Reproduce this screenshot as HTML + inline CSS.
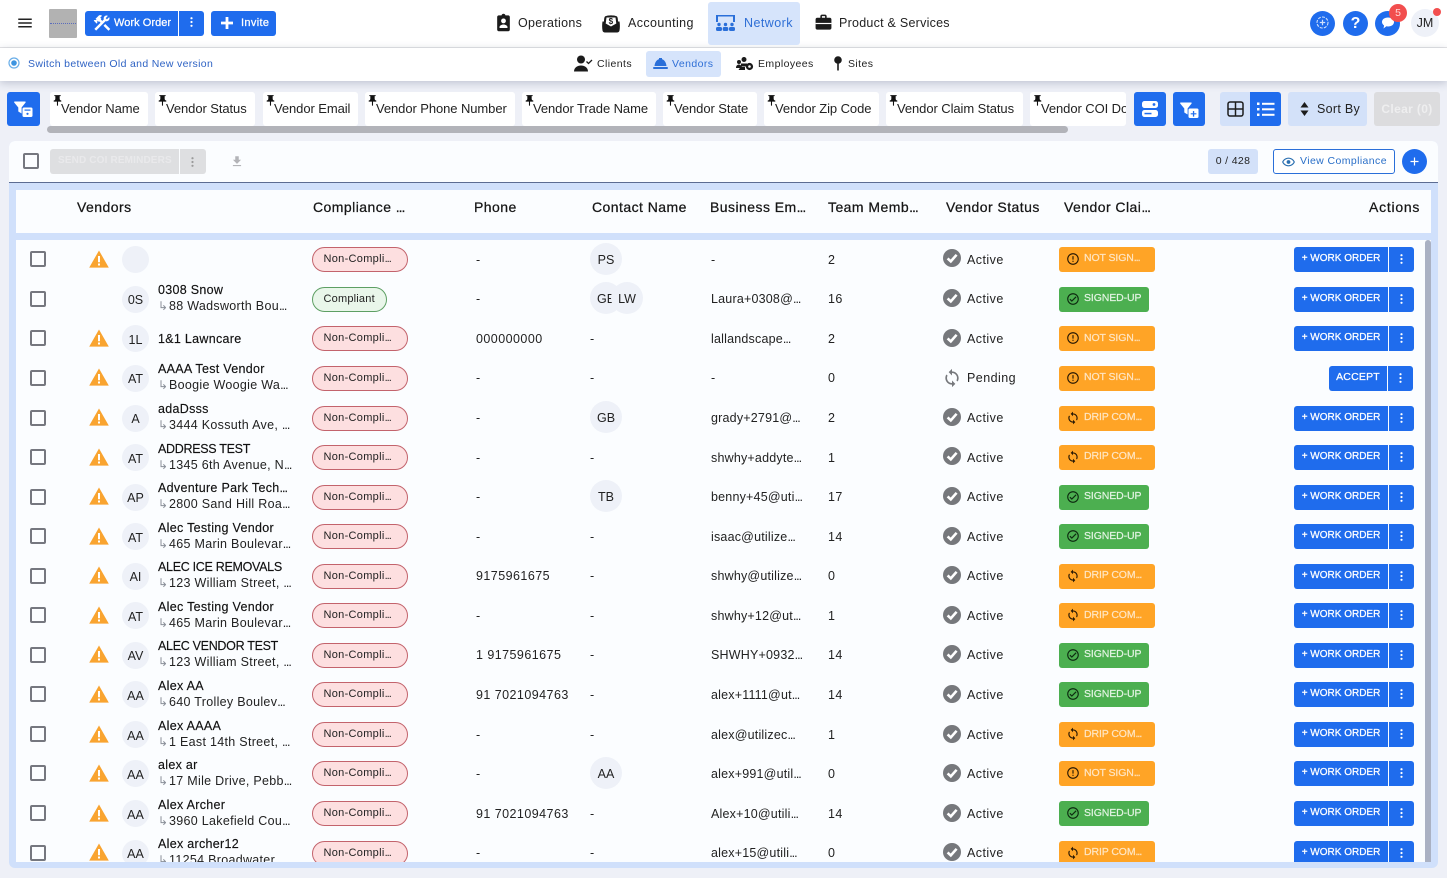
<!DOCTYPE html>
<html><head><meta charset="utf-8"><title>Vendors</title>
<style>
*{box-sizing:border-box}
html,body{margin:0;padding:0}
body{width:1447px;height:878px;overflow:hidden;position:relative;background:#eef0f7;font-family:"Liberation Sans",sans-serif;color:#1a1a1a;font-size:13px;letter-spacing:.35px}
.a{position:absolute}
.t{position:absolute;white-space:nowrap}
svg{display:block;position:absolute}
u{text-decoration:none;letter-spacing:-1px}
.bb{position:absolute;background:#1f6ced;color:#fff}
.chip{position:absolute;top:92px;height:34px;background:#fff;border-radius:3px;overflow:hidden;line-height:34px;padding-left:11px;font-size:13px;white-space:nowrap;color:#222;letter-spacing:-.08px}
.chip svg{left:1px;top:2px;width:13px;height:13px;fill:#111}
.r{position:absolute;left:0;width:1431px;height:40px;font-size:12.5px;line-height:42px;color:#222;letter-spacing:.45px}
.r>*{position:absolute}
.c{left:30px;top:12px;width:16px;height:16px;border:2px solid #75777f;border-radius:2px}
.w{left:89px;top:11px;width:20px;height:18px}
.v{left:122px;top:7px;width:27px;height:27px;border-radius:50%;background:#eef1f8;text-align:center;line-height:30px;font-size:12.5px;letter-spacing:0;font-weight:400}
.n{left:158px;top:4px;line-height:16px;font-size:12.5px;white-space:nowrap;color:#111;letter-spacing:.3px;-webkit-text-stroke:.15px #111}
.n.cp{letter-spacing:-.3px}
.d{left:158px;top:20px;line-height:16px;font-size:12.5px;white-space:nowrap;letter-spacing:.3px}
.d i{font-style:normal;color:#8a8f99;font-size:12px;display:inline-block;width:11px;letter-spacing:0}
.p{left:312px;top:8px;width:96px;height:25px;border-radius:13px;background:#fddfe0;border:1px solid #c3636c;line-height:23px;padding-left:10.5px;font-size:11px;color:#222;letter-spacing:.3px}
.p.g{width:75px;background:#e9f6ea;border-color:#5d9f63;letter-spacing:.2px}
.ph{left:476px}.co{left:590px}.em{left:711px;letter-spacing:.2px}.tm{left:828px}
.o{top:4px;width:32px;height:32px;border-radius:50%;background:#eef1f8;text-align:center;line-height:35px;font-size:12.5px;letter-spacing:0;font-weight:400}
.si{left:943px;top:11px;width:18px;height:18px}
.sp{left:942px;top:11px;width:20px;height:20px;fill:#76787c}
.st{left:967px}
.k{left:1059px;top:8px;width:96px;height:25px;border-radius:3px;background:#ffa426;color:#ffe6c4;font-size:10.5px;line-height:24px;padding-left:25px;letter-spacing:-.1px;-webkit-text-stroke:.2px #ffe6c4}
.k.g{width:90px;background:#4caf50;color:#e4f4e4;-webkit-text-stroke:.2px #e4f4e4}
.k svg{left:7px;top:5px;width:14px;height:14px;fill:#2a1a05;-webkit-text-stroke:0}
.k.g svg{fill:#0d2a10}
.wo{left:1294px;top:8px;width:94px;height:25px;border-radius:3px 0 0 3px;background:#1f6ced;color:#fff;font-size:10px;line-height:24px;text-align:center;letter-spacing:0;-webkit-text-stroke:.25px #fff}
.mo{left:1389px;top:8px;width:25px;height:25px;border-radius:0 3px 3px 0;background:#1f6ced}
.mo svg{left:8.5px;top:7px;width:7px;height:10px;fill:#fff}
.s .c{top:13px}
.s .v{top:8px;line-height:29px}
.s .p{top:9px;line-height:22px}
.s .k,.s .wo{top:9px;line-height:23px}
.s .mo{top:9px}
.z .p{line-height:22px}
.z .k,.z .wo{line-height:23px}
.z .si{top:10px}
.h{position:absolute;top:199px;font-size:14px;color:#161616;line-height:17px;white-space:nowrap;letter-spacing:.45px;-webkit-text-stroke:.25px #161616}
.nv{position:absolute;top:15px;font-size:12.5px;line-height:16px;color:#222;letter-spacing:.3px}
.sb{position:absolute;top:57px;font-size:10.5px;line-height:14px;color:#222;letter-spacing:.42px}
.bt{position:absolute;top:16px;color:#fff;font-size:11px;line-height:14px;-webkit-text-stroke:.25px #fff}
</style></head><body>
<svg width="0" height="0" style="position:absolute"><defs>
<symbol id="w" viewBox="0 0 20 18"><path fill="#f9a430" d="M10 .5 19.8 17.6H.2z"/><path fill="#fff" d="M9 6h2v6.2H9zM9 13.5h2v2H9z"/></symbol>
<symbol id="ok" viewBox="0 0 18 18"><circle cx="9" cy="9" r="9" fill="#76787c"/><path fill="none" stroke="#fff" stroke-width="2.6" d="M4.6 9.4 7.8 12.4 13.6 5.8"/></symbol>
<symbol id="sy" viewBox="0 0 24 24"><path d="M12 4V1L8 5l4 4V6c3.31 0 6 2.69 6 6 0 1.01-.25 1.97-.7 2.8l1.46 1.46C19.54 15.03 20 13.57 20 12c0-4.42-3.58-8-8-8zm0 14c-3.31 0-6-2.69-6-6 0-1.01.25-1.97.7-2.8L5.24 7.74C4.46 8.97 4 10.43 4 12c0 4.42 3.58 8 8 8v3l4-4-4-4v3z"/></symbol>
<symbol id="er" viewBox="0 0 24 24"><path d="M11 15h2v2h-2zm0-8h2v6h-2zm.99-5C6.47 2 2 6.48 2 12s4.47 10 9.99 10C17.52 22 22 17.52 22 12S17.52 2 11.99 2zM12 20c-4.42 0-8-3.58-8-8s3.58-8 8-8 8 3.58 8 8-3.58 8-8 8z"/></symbol>
<symbol id="cc" viewBox="0 0 24 24"><path d="M16.59 7.58L10 14.17l-2.59-2.58L6 13l4 4 8-8zM12 2C6.48 2 2 6.48 2 12s4.48 10 10 10 10-4.48 10-10S17.52 2 12 2zm0 18c-4.42 0-8-3.58-8-8s3.58-8 8-8 8 3.58 8 8-3.58 8-8 8z"/></symbol>
<symbol id="mv" viewBox="0 0 7 10"><circle cx="3.5" cy="1.2" r="1.1"/><circle cx="3.5" cy="5" r="1.1"/><circle cx="3.5" cy="8.8" r="1.1"/></symbol>
<symbol id="pin" viewBox="0 0 24 24"><path d="M16 9V4h1c.55 0 1-.45 1-1s-.45-1-1-1H7c-.55 0-1 .45-1 1s.45 1 1 1h1v5c0 1.66-1.34 3-3 3v2h5.97v7l1 1 1-1v-7H19v-2c-1.66 0-3-1.34-3-3z"/></symbol>
<symbol id="fl" viewBox="0 0 20 17"><path d="M.8.5h10.200c.6 0 .9.6.5 1.100L7.600 6.500v6L4.300 10.500v-4L.3 1.600C-.1 1.100.2.500.8.500z" fill="#fff"/><rect x="8.500" y="6.500" width="10" height="9.500" rx="1.500" fill="#fff"/></symbol>
</defs></svg>

<!-- top bar -->
<div class="a" style="left:0;top:0;width:1447px;height:47px;background:#fff"></div>
<div class="a" style="left:0;top:47px;width:1447px;height:1px;background:#e4e4e6"></div>
<div class="a" style="left:0;top:48px;width:1447px;height:33px;background:#fff;box-shadow:0 2px 8px rgba(70,80,110,.28)"></div>
<svg style="left:16px;top:14px" width="18" height="18" viewBox="0 0 24 24"><path fill="#222" d="M3 18h18v-2H3v2zm0-5h18v-2H3v2zm0-7v2h18V6H3z"/></svg>
<div class="a" style="left:49px;top:9px;width:28px;height:29px;background:#b2b2b2;border-radius:1px"></div>
<div class="a" style="left:50px;top:23px;width:26px;height:1px;border-top:1px dotted #5a6cbc"></div>
<div class="bb" style="left:85px;top:11px;width:93px;height:25px;border-radius:3px 0 0 3px"></div>
<svg style="left:92px;top:13px" width="20" height="20" viewBox="0 0 24 24"><path fill="#fff" d="M13.78 15.3l6 6 2.11-2.16-6-6zM17.5 10c1.93 0 3.5-1.57 3.5-3.5 0-.58-.16-1.12-.41-1.6l-2.7 2.7-1.49-1.49 2.7-2.7c-.48-.25-1.02-.41-1.6-.41C15.57 3 14 4.57 14 6.5c0 .41.08.8.21 1.16l-1.85 1.85-1.78-1.78.71-.71-1.41-1.41L12 3.49c-1.17-1.17-3.07-1.17-4.24 0L4.22 7.03l1.41 1.41H2.81l-.71.71 3.54 3.54.71-.71V9.15l1.41 1.41.71-.71 1.78 1.78-7.41 7.41 2.12 2.12L16.34 9.790c.36.13.75.21 1.16.21z"/></svg>
<div class="bt" style="left:114px;letter-spacing:.05px">Work Order</div>
<div class="bb" style="left:179px;top:11px;width:25px;height:25px;border-radius:0 3px 3px 0"></div>
<svg style="left:188px;top:17px;fill:#fff" width="7" height="10"><use href="#mv"/></svg>
<div class="bb" style="left:211px;top:11px;width:65px;height:25px;border-radius:3px"></div>
<svg style="left:218px;top:14px" width="18" height="18" viewBox="0 0 18 18"><path fill="#fff" d="M7.600 3h2.800v4.600H15v2.800h-4.600V15H7.600v-4.600H3V7.600h4.600z"/></svg>
<div class="bt" style="left:241px;letter-spacing:.35px">Invite</div>

<svg style="left:494px;top:13px" width="19" height="19" viewBox="0 0 24 24"><path fill="#1b1b1b" d="M18 3h-3.500C14.100 1.800 13.100 1 12 1s-2.100.8-2.500 2H6c-1.100 0-2 .9-2 2v16c0 1.100.9 2 2 2h12c1.100 0 2-.9 2-2V5c0-1.100-.9-2-2-2zm-6 4c1.700 0 3 1.300 3 3s-1.300 3-3 3-3-1.300-3-3 1.300-3 3-3zm5 12H7v-1.400c0-2 3.300-3.100 5-3.100s5 1.100 5 3.100z"/></svg>
<div class="nv" style="left:518px">Operations</div>
<svg style="left:602px;top:14px" width="18" height="19" viewBox="0 0 18 19"><path fill="#1b1b1b" d="M3 2.500C5 1 13 1 15 2.500c1 .8 1 5 1 5h1.500c.5 3 .5 6 0 9-.2 1.300-1.300 2-2.500 2H3c-1.200 0-2.300-.7-2.500-2-.5-3-.5-6 0-9H2s0-4.200 1-5z"/><path d="M4.500 3.500h9l.8 6-5.300 3-5.300-3z" fill="#fff"/><text x="9" y="10" text-anchor="middle" font-size="8" font-weight="700" font-family="Liberation Sans" fill="#1b1b1b">$</text></svg>
<div class="nv" style="left:628px;letter-spacing:.4px">Accounting</div>
<div class="a" style="left:708px;top:2px;width:92px;height:43px;background:#d6e4fb;border-radius:3px"></div>
<svg style="left:715px;top:14px" width="21" height="18" viewBox="0 0 21 18" fill="#2a6fd9"><path d="M1 2.500V1h19v1.500zM1 1h2v7H1zM18 1h2v7h-2z"/><circle cx="4" cy="10.500" r="1.700"/><circle cx="10.500" cy="10.500" r="1.700"/><circle cx="17" cy="10.500" r="1.700"/><rect x="1" y="13" width="6" height="4" rx="1.500"/><rect x="7.700" y="13" width="5.600" height="4" rx="1.500"/><rect x="14" y="13" width="6" height="4" rx="1.500"/></svg>
<div class="nv" style="left:744px;color:#2f6fd6;letter-spacing:.45px">Network</div>
<svg style="left:814px;top:13px" width="19" height="19" viewBox="0 0 24 24"><path fill="#1b1b1b" d="M20 6h-4V4c0-1.110-.89-2-2-2h-4c-1.110 0-2 .89-2 2v2H4c-1.110 0-2 .89-2 2v11c0 1.110.89 2 2 2h16c1.110 0 2-.89 2-2V8c0-1.110-.89-2-2-2zm-6 0h-4V4h4v2z"/><rect x="2" y="12.500" width="20" height="1.500" fill="#fff"/></svg>
<div class="nv" style="left:839px;letter-spacing:.25px">Product &amp; Services</div>

<div class="a" style="left:1310px;top:10.500px;width:25px;height:25px;border-radius:50%;background:#1f6ced"></div>
<svg style="left:1316px;top:16px" width="13" height="13" viewBox="0 0 13 13"><circle cx="6.500" cy="6.500" r="5.500" fill="none" stroke="#cfe0fb" stroke-width="1.100" stroke-dasharray="3 1.200"/><path d="M5.900 3.800h1.200v2.100h2.100v1.200H7.100v2.100H5.900V7.100H3.800V5.900h2.100z" fill="#cfe0fb"/></svg>
<div class="a" style="left:1343px;top:10.500px;width:25px;height:25px;border-radius:50%;background:#1f6ced;color:#fff;text-align:center;font-size:16px;font-weight:700;line-height:25px;letter-spacing:0">?</div>
<div class="a" style="left:1375px;top:10.500px;width:25px;height:25px;border-radius:50%;background:#1f6ced"></div>
<svg style="left:1381px;top:16px" width="14" height="14" viewBox="0 0 14 14"><path fill="#fff" d="M7 1.500c3.500 0 6 1.900 6 4.500s-2.500 4.500-6 4.500c-.6 0-1.100 0-1.600-.2L2.500 12.500l.6-3C1.800 8.600 1 7.400 1 6c0-2.600 2.500-4.500 6-4.500z"/></svg>
<div class="a" style="left:1389px;top:4px;width:18px;height:18px;border-radius:50%;background:#f24e4e;color:#ffd9d9;text-align:center;font-size:10.500px;line-height:18px;letter-spacing:0">5</div>
<div class="a" style="left:1411px;top:9px;width:28px;height:28px;border-radius:50%;background:#eef1f8;text-align:center;font-size:12.500px;line-height:29px;letter-spacing:0;color:#222">JM</div>
<div class="a" style="left:1433px;top:8px;width:8px;height:8px;border-radius:50%;background:#f24e4e"></div>

<!-- second row -->
<svg style="left:8px;top:57px" width="12" height="12" viewBox="0 0 12 12"><circle cx="6" cy="6" r="5" fill="none" stroke="#6aaee8" stroke-width="1.200"/><circle cx="6" cy="6" r="2.800" fill="#3d94e0"/></svg>
<div class="sb" style="left:28px;color:#2f63c4;letter-spacing:.33px">Switch between Old and New version</div>
<svg style="left:574px;top:55px" width="19" height="17" viewBox="0 0 19 17"><circle cx="7" cy="4.500" r="4" fill="#1b1b1b"/><path fill="#1b1b1b" d="M0 16.500c0-4 3.500-6 7-6s7 2 7 6z"/><path fill="none" stroke="#1b1b1b" stroke-width="1.300" d="M12.500 6.500l2 2 3.500-3.500"/></svg>
<div class="sb" style="left:597px">Clients</div>
<div class="a" style="left:646px;top:51px;width:75px;height:26px;background:#d6e4fb;border-radius:3px"></div>
<svg style="left:653px;top:57px" width="15" height="13" viewBox="0 0 15 13"><path fill="#2a6fd9" d="M1.500 9C2 4.500 4.500 2.500 6 2.300V1h3v1.300c1.500.2 4 2.200 4.500 6.700z"/><rect x="0" y="10" width="15" height="2" rx="1" fill="#2a6fd9"/></svg>
<div class="sb" style="left:672px;color:#2f6fd6">Vendors</div>
<svg style="left:736px;top:57px" width="18" height="14" viewBox="0 0 18 14" fill="#1b1b1b"><circle cx="8" cy="2.500" r="2.500"/><circle cx="3" cy="5" r="2"/><path d="M0 11c0-2.500 1.500-3.500 3-3.500S6 9 6 11zM5 6.500h6l1 3H5zM4.500 10H9v3H2.500z"/><circle cx="13.500" cy="9.500" r="3.600"/><circle cx="13.500" cy="9.500" r="1.300" fill="#fff"/></svg>
<div class="sb" style="left:758px">Employees</div>
<svg style="left:834px;top:56px" width="8" height="15" viewBox="0 0 8 15"><circle cx="4" cy="4" r="3.800" fill="#1b1b1b"/><rect x="3.200" y="7" width="1.600" height="7.500" fill="#1b1b1b"/></svg>
<div class="sb" style="left:848px">Sites</div>

<!-- filter row -->
<div class="bb" style="left:7px;top:92px;width:33px;height:34px;border-radius:3px"></div>
<svg style="left:14px;top:101px" width="20" height="17"><use href="#fl"/><rect x="10.500" y="8.500" width="6" height="1.200" fill="#1f6ced"/><circle cx="13.500" cy="12.800" r="1.100" fill="#1f6ced"/></svg>
<div class="chip" style="left:50px;width:98px"><svg><use href="#pin"/></svg>Vendor Name</div>
<div class="chip" style="left:155px;width:100px"><svg><use href="#pin"/></svg>Vendor Status</div>
<div class="chip" style="left:263px;width:95px"><svg><use href="#pin"/></svg>Vendor Email</div>
<div class="chip" style="left:365px;width:150px"><svg><use href="#pin"/></svg>Vendor Phone Number</div>
<div class="chip" style="left:522px;width:134px"><svg><use href="#pin"/></svg>Vendor Trade Name</div>
<div class="chip" style="left:663px;width:94px"><svg><use href="#pin"/></svg>Vendor State</div>
<div class="chip" style="left:764px;width:115px"><svg><use href="#pin"/></svg>Vendor Zip Code</div>
<div class="chip" style="left:886px;width:137px"><svg><use href="#pin"/></svg>Vendor Claim Status</div>
<div class="chip" style="left:1030px;width:96px"><svg><use href="#pin"/></svg>Vendor COI Document</div>
<div class="a" style="left:47px;top:126px;width:1021px;height:7px;background:#b2b3b9;border-radius:4px"></div>
<div class="bb" style="left:1134px;top:92px;width:32px;height:34px;border-radius:3px"></div>
<svg style="left:1141px;top:101px" width="18" height="16" viewBox="0 0 18 16"><rect x="1" y="0" width="16" height="7" rx="2.500" fill="#fff"/><rect x="1" y="9" width="16" height="7" rx="2.500" fill="#fff"/><circle cx="13" cy="3.500" r="1.400" fill="#1f6ced"/><rect x="3.500" y="11.800" width="7" height="1.500" fill="#1f6ced"/></svg>
<div class="bb" style="left:1173px;top:92px;width:32px;height:34px;border-radius:3px"></div>
<svg style="left:1180px;top:102px" width="20" height="17"><use href="#fl"/><path fill="#1f6ced" d="M12.900 9h1.300v2.200h2.200v1.200h-2.200v2.200h-1.300v-2.200h-2.200v-1.200h2.200z"/></svg>
<div class="a" style="left:1220px;top:92px;width:31px;height:34px;background:#d3e1f9;border-radius:3px 0 0 3px"></div>
<svg style="left:1227px;top:101px" width="17" height="16" viewBox="0 0 17 16"><rect x="1" y="1" width="15" height="14" rx="2" fill="none" stroke="#1d1d1d" stroke-width="1.500"/><path d="M1 8h15M8.500 1v14" stroke="#1d1d1d" stroke-width="1.500"/></svg>
<div class="bb" style="left:1250px;top:92px;width:31px;height:34px;border-radius:0 3px 3px 0"></div>
<svg style="left:1257px;top:101px" width="18" height="16" viewBox="0 0 18 16" fill="#fff"><rect x="0" y="1.500" width="2.500" height="2.500"/><rect x="0" y="7" width="2.500" height="2.500"/><rect x="0" y="12.500" width="2.500" height="2.500"/><rect x="5" y="1.800" width="12.500" height="2"/><rect x="5" y="7.300" width="12.500" height="2"/><rect x="5" y="12.800" width="12.500" height="2"/></svg>
<div class="a" style="left:1288px;top:92px;width:79px;height:34px;background:#d3e1f9;border-radius:3px"></div>
<svg style="left:1300px;top:102px" width="9" height="14" viewBox="0 0 9 14"><path fill="#1b1b1b" d="M4.500 0 8.500 5.500H.5zM4.500 14 .5 8.500h8z"/></svg>
<div class="t" style="left:1317px;top:101px;font-size:12.500px;line-height:16px;color:#222;letter-spacing:.3px">Sort By</div>
<div class="a" style="left:1374px;top:92px;width:66px;height:34px;background:#dcdcde;border-radius:3px;color:#eeeeef;text-align:center;font-size:12px;line-height:34px;font-weight:700">Clear (0)</div>

<!-- table frame -->
<div class="a" style="left:9px;top:141px;width:1429px;height:727px;background:#d0e0fb;border-radius:6px"></div>
<div class="a" style="left:9px;top:141px;width:1429px;height:41px;background:#fbfdff;border-radius:6px 6px 0 0"></div>
<div class="a" style="left:9px;top:182px;width:1429px;height:1px;background:#5c6c92"></div>
<div class="a" style="left:23px;top:153px;width:16px;height:16px;border:2px solid #75777f;border-radius:2px"></div>
<div class="a" style="left:50px;top:149px;width:129px;height:25px;background:#dedfe1;border-radius:3px 0 0 3px;color:#e9e9eb;font-size:10px;font-weight:700;line-height:24px;padding-left:8px;white-space:nowrap;letter-spacing:.15px">SEND COI REMINDERS</div>
<div class="a" style="left:180px;top:149px;width:26px;height:25px;background:#dedfe1;border-radius:0 3px 3px 0"></div>
<svg style="left:189px;top:157px;fill:#9a9a9a" width="7" height="10"><use href="#mv"/></svg>
<svg style="left:230px;top:154px" width="14" height="15" viewBox="0 0 24 24"><path fill="#b3b4b8" d="M19 9h-4V3H9v6H5l7 7 7-7zM5 18v2h14v-2H5z"/></svg>
<div class="a" style="left:1208px;top:149px;width:50px;height:25px;background:#d3e1f9;border-radius:3px;text-align:center;font-size:10.500px;line-height:24px;color:#222">0 / 428</div>
<div class="a" style="left:1273px;top:149px;width:122px;height:25px;background:#fff;border:1px solid #2a6fd9;border-radius:3px"></div>
<svg style="left:1281px;top:155px" width="15" height="14" viewBox="0 0 24 24"><path fill="#2a6fb0" d="M12 4.500C7 4.500 2.730 7.610 1 12c1.730 4.390 6 7.500 11 7.500s9.270-3.110 11-7.500c-1.730-4.390-6-7.500-11-7.500zm0 13c-3.500 0-7-2-8.800-5.500C5 8.500 8.500 6.500 12 6.500s7 2 8.800 5.500c-1.800 3.500-5.300 5.500-8.800 5.500z"/><circle cx="12" cy="12" r="3.200" fill="#2a6fb0"/></svg>
<div class="t" style="left:1300px;top:154px;font-size:10.500px;line-height:14px;color:#2a6fc8;letter-spacing:.4px">View Compliance</div>
<div class="a" style="left:1402px;top:149px;width:25px;height:25px;border-radius:50%;background:#1f6ced"></div>
<svg style="left:1408px;top:155px" width="13" height="13" viewBox="0 0 13 13"><path fill="#fff" d="M5.900 2.500h1.200v3.400h3.400v1.200H7.100v3.400H5.900V7.100H2.500V5.900h3.400z"/></svg>

<!-- table header -->
<div class="a" style="left:16px;top:190px;width:1415px;height:43px;background:#fbfdff"></div>
<div class="h" style="left:77px">Vendors</div>
<div class="h" style="left:313px">Compliance <u>...</u></div>
<div class="h" style="left:474px">Phone</div>
<div class="h" style="left:592px">Contact Name</div>
<div class="h" style="left:710px">Business Em<u>...</u></div>
<div class="h" style="left:828px">Team Memb<u>...</u></div>
<div class="h" style="left:946px">Vendor Status</div>
<div class="h" style="left:1064px">Vendor Clai<u>...</u></div>
<div class="h" style="left:1369px;letter-spacing:.75px">Actions</div>

<!-- table body -->
<div class="a" style="left:16px;top:240px;width:1415px;height:622px;background:#fbfdff"></div>
<div class="a" style="left:1425px;top:240px;width:6px;height:622px;background:#aab1c3;border-radius:3px 3px 0 0"></div>
<div class="a" id="b" style="left:0;top:240px;width:1425px;height:622px;overflow:hidden">

<div class="r z" style="top:-1px"><i class="c"></i><svg class="w"><use href="#w"/></svg><b class="v"></b><span class="p">Non-Compli<u>...</u></span><span class="ph">-</span><b class="o" style="left:590px">PS</b><span class="em">-</span><span class="tm">2</span><svg class="si"><use href="#ok"/></svg><span class="st">Active</span><span class="k"><svg><use href="#er"/></svg>NOT SIGN<u>...</u></span><span class="wo">+ WORK ORDER</span><span class="mo"><svg><use href="#mv"/></svg></span></div>

<div class="r s" style="top:38px"><i class="c"></i><b class="v">0S</b><span class="n">0308 Snow</span><span class="d"><i>↳</i>88 Wadsworth Bou<u>...</u></span><span class="p g">Compliant</span><span class="ph">-</span><b class="o" style="left:590px;text-align:left;padding-left:7px">GE</b><b class="o" style="left:611px">LW</b><span class="em">Laura+0308@<u>...</u></span><span class="tm">16</span><svg class="si"><use href="#ok"/></svg><span class="st">Active</span><span class="k g"><svg><use href="#cc"/></svg>SIGNED-UP</span><span class="wo">+ WORK ORDER</span><span class="mo"><svg><use href="#mv"/></svg></span></div>

<div class="r" style="top:78px"><i class="c"></i><svg class="w"><use href="#w"/></svg><b class="v">1L</b><span class="n" style="top:13px">1&amp;1 Lawncare</span><span class="p">Non-Compli<u>...</u></span><span class="ph">000000000</span><span class="co">-</span><span class="em">lallandscape<u>...</u></span><span class="tm">2</span><svg class="si"><use href="#ok"/></svg><span class="st">Active</span><span class="k"><svg><use href="#er"/></svg>NOT SIGN<u>...</u></span><span class="wo">+ WORK ORDER</span><span class="mo"><svg><use href="#mv"/></svg></span></div>

<div class="r s" style="top:117px"><i class="c"></i><svg class="w"><use href="#w"/></svg><b class="v">AT</b><span class="n">AAAA Test Vendor</span><span class="d"><i>↳</i>Boogie Woogie Wa<u>...</u></span><span class="p">Non-Compli<u>...</u></span><span class="ph">-</span><span class="co">-</span><span class="em">-</span><span class="tm">0</span><svg class="sp"><use href="#sy"/></svg><span class="st">Pending</span><span class="k"><svg><use href="#er"/></svg>NOT SIGN<u>...</u></span><span class="wo" style="left:1329px;width:58px;font-size:10.500px;letter-spacing:.2px">ACCEPT</span><span class="mo" style="left:1388px"><svg><use href="#mv"/></svg></span></div>

<div class="r s" style="top:157px"><i class="c"></i><svg class="w"><use href="#w"/></svg><b class="v">A</b><span class="n">adaDsss</span><span class="d"><i>↳</i>3444 Kossuth Ave, <u>...</u></span><span class="p">Non-Compli<u>...</u></span><span class="ph">-</span><b class="o" style="left:590px">GB</b><span class="em">grady+2791@<u>...</u></span><span class="tm">2</span><svg class="si"><use href="#ok"/></svg><span class="st">Active</span><span class="k"><svg><use href="#sy"/></svg>DRIP COM<u>...</u></span><span class="wo">+ WORK ORDER</span><span class="mo"><svg><use href="#mv"/></svg></span></div>

<div class="r z" style="top:197px"><i class="c"></i><svg class="w"><use href="#w"/></svg><b class="v">AT</b><span class="n cp">ADDRESS TEST</span><span class="d"><i>↳</i>1345 6th Avenue, N<u>...</u></span><span class="p">Non-Compli<u>...</u></span><span class="ph">-</span><span class="co">-</span><span class="em">shwhy+addyte<u>...</u></span><span class="tm">1</span><svg class="si"><use href="#ok"/></svg><span class="st">Active</span><span class="k"><svg><use href="#sy"/></svg>DRIP COM<u>...</u></span><span class="wo">+ WORK ORDER</span><span class="mo"><svg><use href="#mv"/></svg></span></div>

<div class="r s" style="top:236px"><i class="c"></i><svg class="w"><use href="#w"/></svg><b class="v">AP</b><span class="n">Adventure Park Tech<u>...</u></span><span class="d"><i>↳</i>2800 Sand Hill Roa<u>...</u></span><span class="p">Non-Compli<u>...</u></span><span class="ph">-</span><b class="o" style="left:590px">TB</b><span class="em">benny+45@uti<u>...</u></span><span class="tm">17</span><svg class="si"><use href="#ok"/></svg><span class="st">Active</span><span class="k g"><svg><use href="#cc"/></svg>SIGNED-UP</span><span class="wo">+ WORK ORDER</span><span class="mo"><svg><use href="#mv"/></svg></span></div>

<div class="r" style="top:276px"><i class="c"></i><svg class="w"><use href="#w"/></svg><b class="v">AT</b><span class="n">Alec Testing Vendor</span><span class="d"><i>↳</i>465 Marin Boulevar<u>...</u></span><span class="p">Non-Compli<u>...</u></span><span class="ph">-</span><span class="co">-</span><span class="em">isaac@utilize<u>...</u></span><span class="tm">14</span><svg class="si"><use href="#ok"/></svg><span class="st">Active</span><span class="k g"><svg><use href="#cc"/></svg>SIGNED-UP</span><span class="wo">+ WORK ORDER</span><span class="mo"><svg><use href="#mv"/></svg></span></div>

<div class="r s" style="top:315px"><i class="c"></i><svg class="w"><use href="#w"/></svg><b class="v">AI</b><span class="n cp">ALEC ICE REMOVALS</span><span class="d"><i>↳</i>123 William Street, <u>...</u></span><span class="p">Non-Compli<u>...</u></span><span class="ph">9175961675</span><span class="co">-</span><span class="em">shwhy@utilize<u>...</u></span><span class="tm">0</span><svg class="si"><use href="#ok"/></svg><span class="st">Active</span><span class="k"><svg><use href="#sy"/></svg>DRIP COM<u>...</u></span><span class="wo">+ WORK ORDER</span><span class="mo"><svg><use href="#mv"/></svg></span></div>

<div class="r" style="top:355px"><i class="c"></i><svg class="w"><use href="#w"/></svg><b class="v">AT</b><span class="n">Alec Testing Vendor</span><span class="d"><i>↳</i>465 Marin Boulevar<u>...</u></span><span class="p">Non-Compli<u>...</u></span><span class="ph">-</span><span class="co">-</span><span class="em">shwhy+12@ut<u>...</u></span><span class="tm">1</span><svg class="si"><use href="#ok"/></svg><span class="st">Active</span><span class="k"><svg><use href="#sy"/></svg>DRIP COM<u>...</u></span><span class="wo">+ WORK ORDER</span><span class="mo"><svg><use href="#mv"/></svg></span></div>

<div class="r s" style="top:394px"><i class="c"></i><svg class="w"><use href="#w"/></svg><b class="v">AV</b><span class="n cp">ALEC VENDOR TEST</span><span class="d"><i>↳</i>123 William Street, <u>...</u></span><span class="p">Non-Compli<u>...</u></span><span class="ph">1 9175961675</span><span class="co">-</span><span class="em">SHWHY+0932<u>...</u></span><span class="tm">14</span><svg class="si"><use href="#ok"/></svg><span class="st">Active</span><span class="k g"><svg><use href="#cc"/></svg>SIGNED-UP</span><span class="wo">+ WORK ORDER</span><span class="mo"><svg><use href="#mv"/></svg></span></div>

<div class="r" style="top:434px"><i class="c"></i><svg class="w"><use href="#w"/></svg><b class="v">AA</b><span class="n">Alex AA</span><span class="d"><i>↳</i>640 Trolley Boulev<u>...</u></span><span class="p">Non-Compli<u>...</u></span><span class="ph">91 7021094763</span><span class="co">-</span><span class="em">alex+1111@ut<u>...</u></span><span class="tm">14</span><svg class="si"><use href="#ok"/></svg><span class="st">Active</span><span class="k g"><svg><use href="#cc"/></svg>SIGNED-UP</span><span class="wo">+ WORK ORDER</span><span class="mo"><svg><use href="#mv"/></svg></span></div>

<div class="r" style="top:474px"><i class="c"></i><svg class="w"><use href="#w"/></svg><b class="v">AA</b><span class="n">Alex AAAA</span><span class="d"><i>↳</i>1 East 14th Street, <u>...</u></span><span class="p">Non-Compli<u>...</u></span><span class="ph">-</span><span class="co">-</span><span class="em">alex@utilizec<u>...</u></span><span class="tm">1</span><svg class="si"><use href="#ok"/></svg><span class="st">Active</span><span class="k"><svg><use href="#sy"/></svg>DRIP COM<u>...</u></span><span class="wo">+ WORK ORDER</span><span class="mo"><svg><use href="#mv"/></svg></span></div>

<div class="r" style="top:513px"><i class="c"></i><svg class="w"><use href="#w"/></svg><b class="v">AA</b><span class="n">alex ar</span><span class="d"><i>↳</i>17 Mile Drive, Pebb<u>...</u></span><span class="p">Non-Compli<u>...</u></span><span class="ph">-</span><b class="o" style="left:590px">AA</b><span class="em">alex+991@util<u>...</u></span><span class="tm">0</span><svg class="si"><use href="#ok"/></svg><span class="st">Active</span><span class="k"><svg><use href="#er"/></svg>NOT SIGN<u>...</u></span><span class="wo">+ WORK ORDER</span><span class="mo"><svg><use href="#mv"/></svg></span></div>

<div class="r" style="top:553px"><i class="c"></i><svg class="w"><use href="#w"/></svg><b class="v">AA</b><span class="n">Alex Archer</span><span class="d"><i>↳</i>3960 Lakefield Cou<u>...</u></span><span class="p">Non-Compli<u>...</u></span><span class="ph">91 7021094763</span><span class="co">-</span><span class="em">Alex+10@utili<u>...</u></span><span class="tm">14</span><svg class="si"><use href="#ok"/></svg><span class="st">Active</span><span class="k g"><svg><use href="#cc"/></svg>SIGNED-UP</span><span class="wo">+ WORK ORDER</span><span class="mo"><svg><use href="#mv"/></svg></span></div>

<div class="r s" style="top:592px"><i class="c"></i><svg class="w"><use href="#w"/></svg><b class="v">AA</b><span class="n">Alex archer12</span><span class="d"><i>↳</i>11254 Broadwater<u>...</u></span><span class="p">Non-Compli<u>...</u></span><span class="ph">-</span><span class="co">-</span><span class="em">alex+15@utili<u>...</u></span><span class="tm">0</span><svg class="si"><use href="#ok"/></svg><span class="st">Active</span><span class="k"><svg><use href="#sy"/></svg>DRIP COM<u>...</u></span><span class="wo">+ WORK ORDER</span><span class="mo"><svg><use href="#mv"/></svg></span></div>

</div>
</body></html>
